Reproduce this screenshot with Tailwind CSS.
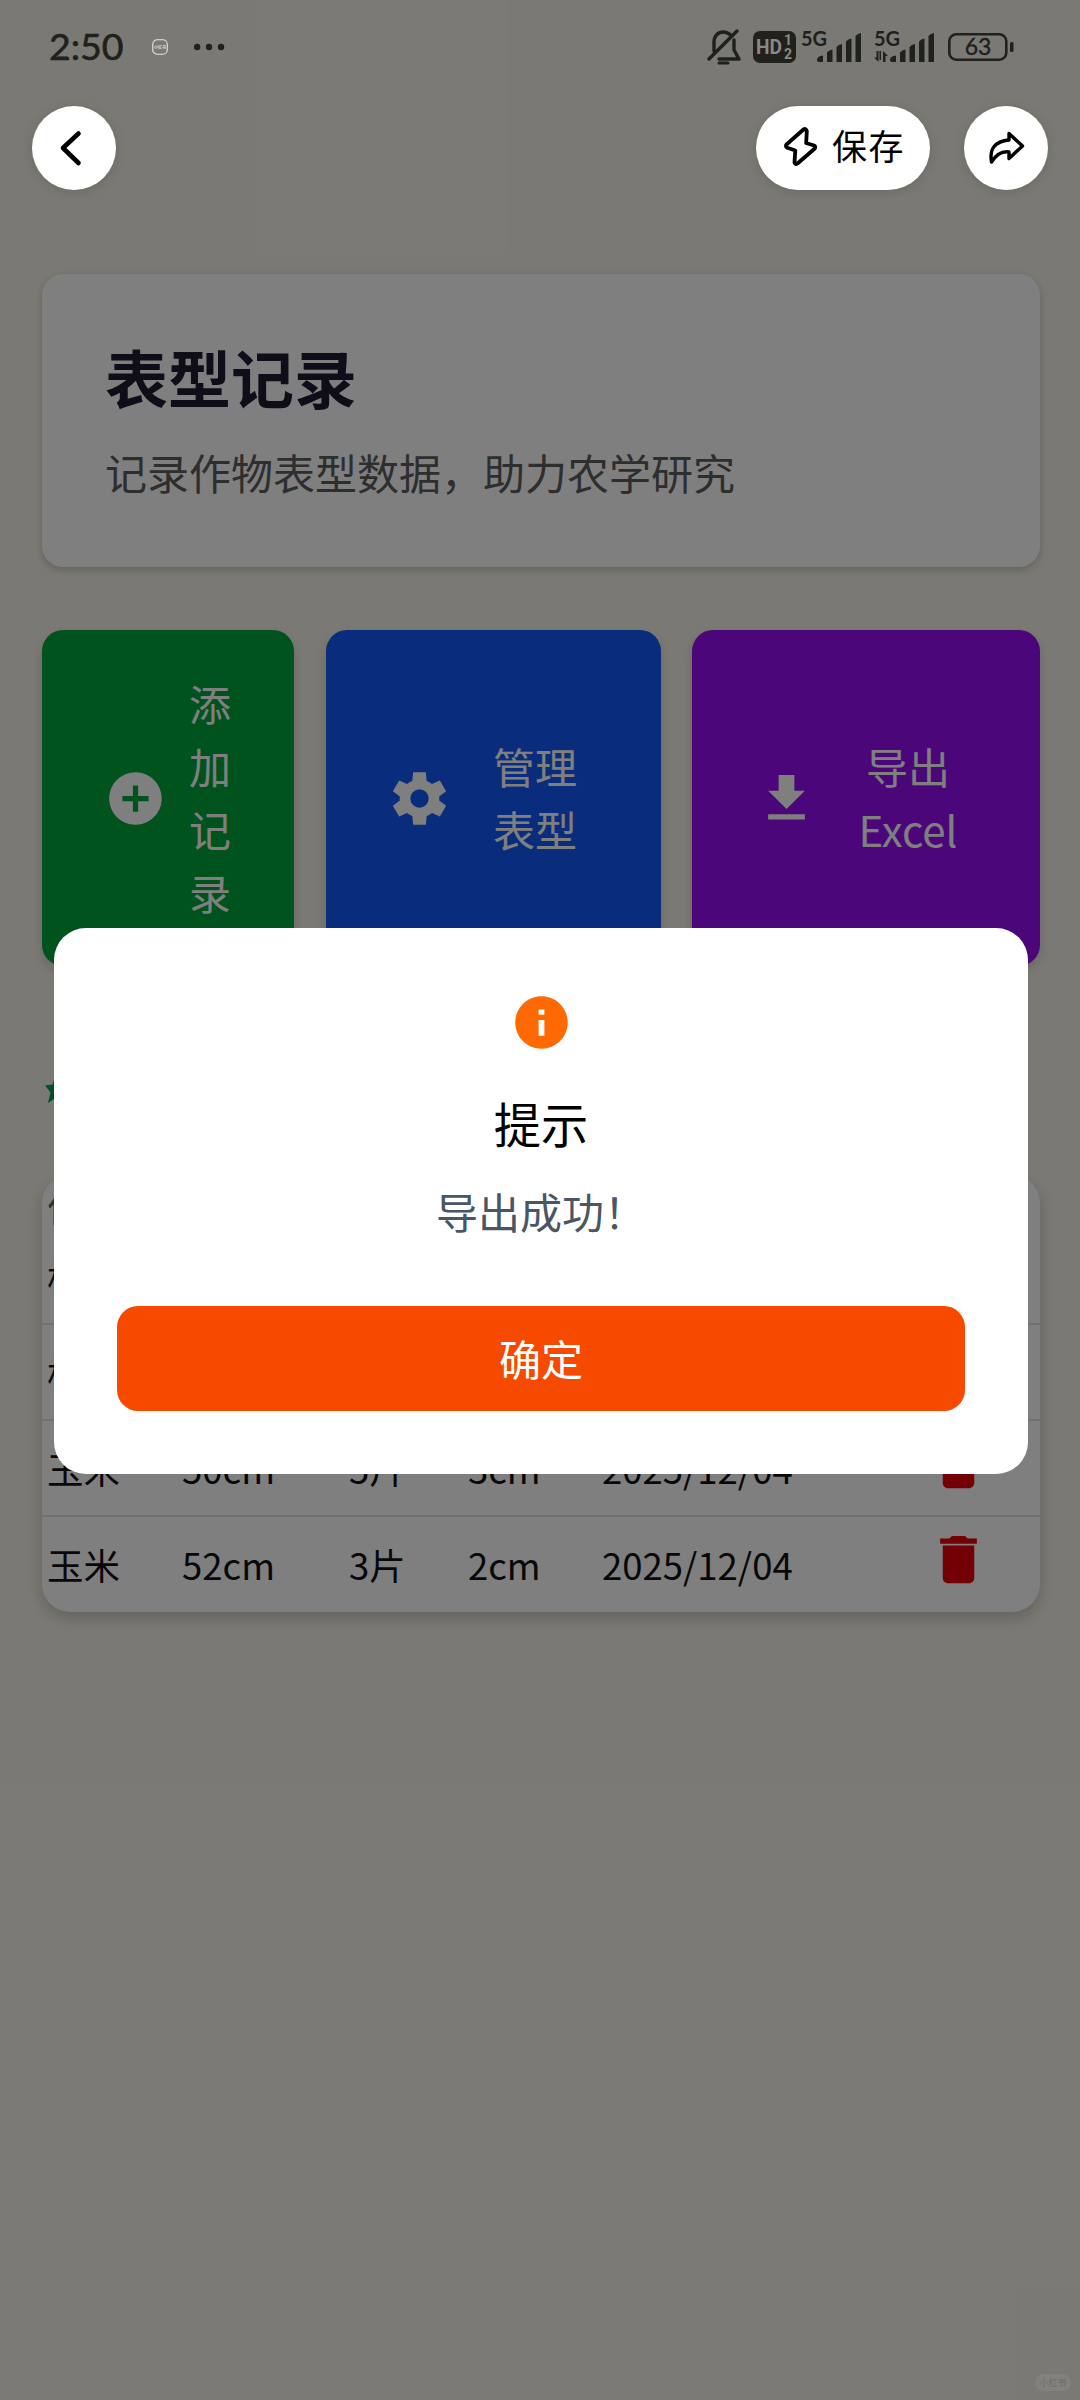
<!DOCTYPE html>
<html lang="zh-CN">
<head>
<meta charset="utf-8">
<title>表型记录</title>
<script src="https://cdn.jsdelivr.net/npm/@tailwindcss/browser@4"></script>
</head>
<body class="relative w-[1080px] h-[2400px] overflow-hidden bg-[#f6f3e9] font-['Noto_Sans_CJK_SC',sans-serif] text-[42px] leading-[63px]">

<!-- Page -->
<main class="flex flex-col pt-[274px] px-[42px] w-[1082px]">
  <section class="h-[293px] w-[998px] rounded-[21px] bg-[#ffffff] px-[63px] pt-[60px] shadow-[0_3px_8px_rgba(0,0,0,0.2)]">
    <h1 class="text-[63px] leading-[84px] font-bold text-[#1e1b2e]">表型记录</h1>
    <p class="mt-[22px] text-[#5c5c5e]">记录作物表型数据，助力农学研究</p>
  </section>

  <section class="mt-[63px] flex h-[336px] w-[998px] gap-[31px] text-white text-center">
    <button class="flex w-[252px] items-center rounded-[21px] bg-[#00a63a] pl-[62px] shadow-[0_5px_12px_rgba(0,0,0,0.15)]">
      <svg class="size-[63px] shrink-0" viewBox="0 0 24 24" fill="currentColor"><path d="M12 2C6.480 2 2 6.480 2 12s4.480 10 10 10 10-4.480 10-10S17.520 2 12 2zm5 11h-4v4h-2v-4H7v-2h4V7h2v4h4v2z"/></svg>
      <span class="ml-[22px] w-[42px] pb-[3px]">添加记录</span>
    </button>
    <button class="ml-[1px] flex w-[335px] items-center rounded-[21px] bg-[#1459fa] pl-[62px] shadow-[0_5px_12px_rgba(0,0,0,0.15)]">
      <svg class="size-[63px] shrink-0" viewBox="0 0 24 24" fill="currentColor"><path d="M9.250 5.300 9.600 2h4.800l.35 3.300a7.300 7.300 0 0 1 2 1.150l3-1.330 2.400 4.150L19.500 11.200a7.300 7.300 0 0 1 0 1.600l2.650 1.930-2.400 4.150-3-1.330a7.300 7.300 0 0 1-2 1.150L14.400 22H9.600l-.35-3.300a7.300 7.300 0 0 1-2-1.150l-3 1.330-2.400-4.150L4.500 12.800a7.300 7.300 0 0 1 0-1.600L1.850 9.270l2.400-4.150 3 1.330a7.300 7.300 0 0 1 2-1.150zM12 8.500a3.500 3.500 0 1 0 0 7 3.500 3.500 0 0 0 0-7z"/></svg>
      <span class="ml-[42px] w-[84px] pb-[3px]">管理表型</span>
    </button>
    <button class="flex w-[348px] items-center rounded-[21px] bg-[#960ff4] pl-[63px] shadow-[0_5px_12px_rgba(0,0,0,0.15)]">
      <svg class="size-[63px] shrink-0" viewBox="0 0 24 24" fill="currentColor"><path d="M19 9h-4V3H9v6H5l7 7 7-7zM5 18v2h14v-2H5z"/></svg>
      <span class="ml-[40px] w-[100px] pb-[3px]">导出 Excel</span>
    </button>
  </section>

  <div class="mt-[105px] flex h-[34px] items-center">
    <svg class="size-[34px]" viewBox="0 0 34 34" fill="#00a060"><path d="M3 14.500l7.500-1L13.500 4l5 9L29 14.500l-8 6.500 2 11-8.500-5.500L6 32l2.500-10.500z"/></svg>
  </div>

  <section class="mt-[70px] w-[998px] h-[437px] overflow-hidden rounded-[28px] bg-[#ffffff] text-[36.500px] text-[#101014] shadow-[0_6px_16px_rgba(0,0,0,0.2)]">
    <div class="grid h-[54px] grid-cols-[134px_167px_119px_135px_443px] items-center pb-[10px] pl-[5px] text-[#5c5c5e]"><span>作物</span></div>
    <div class="grid h-[96px] grid-cols-[134px_167px_119px_135px_283px_1fr] items-center border-b-2 border-[#e2e2e2] pl-[5px]"><span>棉花</span></div>
    <div class="grid h-[96px] grid-cols-[134px_167px_119px_135px_283px_1fr] items-center border-b-2 border-[#e2e2e2] pl-[5px]"><span>棉花</span></div>
    <div class="grid h-[96px] grid-cols-[135px_167px_119px_134px_283px_1fr] items-center border-b-2 border-[#e2e2e2] pl-[5px]">
      <span class="pt-[1px]">玉米</span><span class="pt-[1px]">50cm</span><span class="pt-[1px]">5片</span><span class="pt-[1px]">3cm</span><span class="pt-[1px]">2025/12/04</span>
      <svg class="mb-[8px] ml-[42px] size-[63px]" viewBox="0 0 24 24" fill="#e70009"><path d="M6 19c0 1.100.9 2 2 2h8c1.100 0 2-.9 2-2V6.700H6V19zM19 4h-3.500l-1-1h-5l-1 1H5v2h14V4z"/></svg>
    </div>
    <div class="grid h-[95px] grid-cols-[135px_167px_119px_134px_283px_1fr] items-center pl-[5px]">
      <span>玉米</span><span>52cm</span><span>3片</span><span>2cm</span><span>2025/12/04</span>
      <svg class="mb-[10px] ml-[42px] size-[63px]" viewBox="0 0 24 24" fill="#e70009"><path d="M6 19c0 1.100.9 2 2 2h8c1.100 0 2-.9 2-2V6.700H6V19zM19 4h-3.500l-1-1h-5l-1 1H5v2h14V4z"/></svg>
    </div>
  </section>
</main>

<!-- Dialog -->
<div class="absolute inset-0 flex flex-col items-center bg-black/50 pt-[928px] pl-[2px]">
  <div class="flex h-[546px] w-[974px] flex-col items-center rounded-[32px] bg-white px-[63px] pt-[63px]">
    <svg class="size-[63px]" viewBox="0 0 24 24" fill="#ff6900"><path d="M12 2C6.480 2 2 6.480 2 12s4.480 10 10 10 10-4.480 10-10S17.520 2 12 2zm1.100 15h-2.200v-6h2.200v6zm0-8h-2.200V7h2.200v2z"/></svg>
    <h2 class="mt-[32px] text-[47.250px] leading-[73px] text-black">提示</h2>
    <p class="mt-[20px] text-[#4a5565]">导出成功！</p>
    <button class="mt-[64px] h-[105px] w-[848px] rounded-[21px] bg-[#f54a00] pb-[3px] text-white">确定</button>
  </div>
</div>

<!-- System status bar -->
<header class="absolute left-0 top-0 flex h-[94px] w-[1080px] items-center text-[#20201d]">
  <span class="ml-[49px] w-[103px] pb-[2px] font-['Lato'] text-[37.500px] leading-[40px] [-webkit-text-stroke:0.6px]">2:50</span>
  <svg class="size-[16px]" viewBox="0 0 16 16"><rect x=".75" y=".75" width="14.500" height="14.500" rx="4.500" fill="none" stroke="#e6e6e2" stroke-width="1.100"/><text x="8" y="9.800" text-anchor="middle" font-size="4" font-weight="700" font-family="Noto Sans CJK SC" fill="#d6d6d2">小红书</text></svg>
  <svg class="ml-[26px] h-[8px] w-[32px]" viewBox="0 0 32 8" fill="currentColor"><circle cx="3.200" cy="4" r="3.200"/><circle cx="15" cy="4" r="3.200"/><circle cx="27" cy="4" r="3.200"/></svg>
  <svg class="ml-[481px] h-[38px] w-[34px]" viewBox="0 0 34 38" fill="none" stroke="currentColor" stroke-width="3.400" stroke-linecap="round" stroke-linejoin="round"><path d="M2 31 30 3M7 23V14C7 8 11 4 16.500 4c3 0 5 1 7 3M27 12v10l5 9H12"/><path d="M12 35h9" stroke-width="3"/></svg>
  <svg class="ml-[12px] h-[32px] w-[43px]" viewBox="0 0 43 32"><rect width="43" height="32" rx="7" fill="currentColor"/><g fill="#8b8983" font-family="Roboto" font-weight="700"><text x="3" y="23" font-size="19.500" textLength="26" lengthAdjust="spacingAndGlyphs">HD</text><text x="31" y="14" font-size="14">1</text><text x="31" y="28" font-size="14">2</text></g></svg>
  <svg class="mb-[4px] ml-[4px] h-[38px] w-[64px]" viewBox="-1 -4 64 38" fill="currentColor"><text x="0" y="15.500" font-size="20" font-weight="700" font-family="Lato">5G</text><path d="M16 30q0-4 6-4.500V32h-4q-2 0-2-2zM26 22.500q2-2.500 5.500-3V32h-5.500zM35.500 17q2-2.500 5.500-3V32h-5.500zM45 11.500q2-2.500 5.500-3V32H45zM54.500 6q2-2.500 5.500-3v29h-5.500z"/></svg>
  <svg class="mb-[4px] ml-[9px] h-[38px] w-[64px]" viewBox="-1 -4 64 38" fill="currentColor"><text x="0" y="15.500" font-size="20" font-weight="700" font-family="Lato">5G</text><path d="M4.500 21v11L0 27.500h2.500V21zM7 21v9H5.500v-9zM9 32V21l5 5h-2.500v6z"/><path d="M16 30q0-4 6-4.500V32h-4q-2 0-2-2zM26 22.500q2-2.500 5.500-3V32h-5.500zM35.500 17q2-2.500 5.500-3V32h-5.500zM45 11.500q2-2.500 5.500-3V32H45zM54.500 6q2-2.500 5.500-3v29h-5.500z"/></svg>
  <svg class="ml-[11px] mb-[1px] h-[30px] w-[66px]" viewBox="0 0 66 30"><rect x="1.300" y="2.300" width="57" height="25.400" rx="7" fill="none" stroke="currentColor" stroke-width="2.600"/><rect x="62" y="10" width="3.500" height="10" rx="1.500" fill="currentColor"/><text x="30" y="23" text-anchor="middle" font-size="23" font-family="Lato" fill="currentColor" stroke="currentColor" stroke-width=".4">63</text></svg>
</header>

<!-- Floating navigation -->
<nav class="absolute left-0 top-[105px] flex w-[1080px] items-center text-black">
  <button class="ml-[32px] flex size-[84px] items-center justify-center rounded-full bg-white shadow-[0_2px_12px_rgba(0,0,0,0.12)]">
    <svg class="size-[84px]" viewBox="0 0 84 84" fill="none" stroke="currentColor" stroke-width="4.600" stroke-linecap="round" stroke-linejoin="round"><path d="M46.500 27.500 31 42l15.500 15"/></svg>
  </button>
  <button class="ml-[640px] flex h-[84px] w-[174px] items-center rounded-full bg-white pl-[24px] text-[35px] leading-[52px] shadow-[0_2px_12px_rgba(0,0,0,0.12)]">
    <svg class="mb-[2px] h-[48px] w-[42px]" viewBox="0 0 42 48" fill="none" stroke="currentColor" stroke-width="3.800" stroke-linejoin="round"><path d="M23.500 6.500 6.500 21.500q-1.500 2 .8 3.200l8 2.800-.8 12q.7 2.500 3 1L34.800 25.500q1.200-2-.8-3L26.200 20l.6-12q-.8-3-3.300-1.500z"/></svg>
    <span class="ml-[10px] pb-[6px] tracking-[1.500px]">保存</span>
  </button>
  <button class="ml-[34px] mt-[1px] size-[84px] rounded-full bg-white shadow-[0_2px_12px_rgba(0,0,0,0.12)]">
    <svg class="size-[84px]" viewBox="0 0 84 84" fill="none" stroke="currentColor" stroke-width="3.400" stroke-linejoin="round"><path d="M45 27.500 58.500 40 45 52.500V46q-10-1.500-17.500 10Q24 36 45 34z"/></svg>
  </button>
</nav>

<div class="absolute left-[1035px] top-[2374px] flex h-[17px] w-[36px] items-center justify-center rounded-full bg-[#83817d] text-[9px] leading-[12px] text-[#706e6a]">小红书</div>
</body>
</html>
